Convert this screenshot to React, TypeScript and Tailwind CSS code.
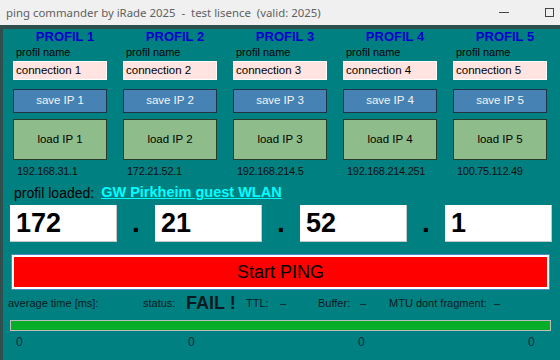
const profiles = [
  { n: 1, name: "connection 1", ip: "192.168.31.1" },
  { n: 2, name: "connection 2", ip: "172.21.52.1" },
  { n: 3, name: "connection 3", ip: "192.168.214.5" },
  { n: 4, name: "connection 4", ip: "192.168.214.251" },
  { n: 5, name: "connection 5", ip: "100.75.112.49" },
];

const octets = ["172", "21", "52", "1"];

function ProfileColumn({ n, name, ip }: { n: number; name: string; ip: string }) {
  return (
    <div className="flex w-[94px] flex-col">
      <div className="h-[15px] pl-[10px] text-center text-[13px] font-bold leading-[15px] text-[#0000cd]">
        PROFIL {n}
      </div>
      <div className="mt-[1px] h-[14px] pl-[3px] text-[11px] leading-[14px] text-black">profil name</div>
      <div className="mt-[2px] flex h-[19px] items-center border border-white bg-[#ffe4e1] pl-[2px] text-[11.5px] text-black">
        {name}
      </div>
      <div className="mt-[9px] flex h-[24px] items-center justify-center border border-[#1c3348] bg-[#4682b4] text-[11.5px] text-[#f4f4f4]">
        save IP {n}
      </div>
      <div className="mt-[6px] flex h-[41px] items-center justify-center border border-[#283a28] bg-[#8fbc8b] text-[11.5px] text-black">
        load IP {n}
      </div>
      <div className="mt-[4px] h-[14px] whitespace-nowrap pl-[4px] text-[11px] leading-[14px] tracking-[-0.3px] text-[#111]">
        {ip}
      </div>
    </div>
  );
}

export default function App() {
  return (
    <div className="flex h-[360px] w-[560px] flex-col overflow-hidden font-['Liberation_Sans',Arial,sans-serif]">
      <div className="flex h-[25px] shrink-0 items-center bg-[#f0f0f0] pl-[6px]">
        <span className="whitespace-pre font-['Noto_Sans',sans-serif] text-[11.4px] text-[#5f5f5f]">
          {"ping commander by iRade 2025  -  test lisence  (valid: 2025)"}
        </span>
        <span className="ml-auto mr-[36px] block h-px w-[10px] shrink-0 bg-[#444]" />
        <span className="mr-[6px] block h-[9px] w-[9px] shrink-0 border border-[#444]" />
      </div>
      <div className="flex flex-1 flex-col border-l-[3px] border-t-[4px] border-[#2f4f4f] bg-[#008080]">
        <div className="flex gap-[16px] pl-[10px]">
          {profiles.map((p) => (
            <ProfileColumn key={p.n} {...p} />
          ))}
        </div>

        <div className="mt-[7px] flex h-[16px] items-center gap-[7px] pl-[11px]">
          <span className="text-[14px] text-black">profil loaded:</span>
          <span className="text-[14.5px] font-bold text-[#00ffff] underline">GW Pirkheim guest WLAN</span>
        </div>

        <div className="mt-[3px] flex items-baseline pl-[7px]">
          {octets.map((o, i) => (
            <div key={i} className="flex items-baseline">
              <div className="h-[37px] w-[107px] border-b border-r border-[#c8c8c8] bg-white pl-[6px] text-[27px] font-bold leading-[37px] text-black">
                {o}
              </div>
              {i < 3 && (
                <span className="w-[38px] text-center text-[28px] font-bold leading-[37px] text-black">.</span>
              )}
            </div>
          ))}
        </div>

        <div className="ml-[9px] mt-[13px] flex h-[34px] w-[537px] items-center justify-center border-2 border-white bg-[#ff0000] text-[18px] text-black shadow-[0_0_0_1px_#4a8ccc]">
          Start PING
        </div>

        <div className="mt-[5px] flex h-[18px] items-center whitespace-nowrap pl-[5px] text-[11px] text-[#0b1a22]">
          <span className="w-[135px]">average time [ms]:</span>
          <span className="w-[43px]">status:</span>
          <span className="w-[60px] text-[18px] font-bold">FAIL !</span>
          <span className="w-[34px]">TTL:</span>
          <span className="w-[38px]">–</span>
          <span className="w-[42px]">Buffer:</span>
          <span className="w-[29px]">–</span>
          <span className="w-[105px]">MTU dont fragment:</span>
          <span>–</span>
        </div>

        <div className="ml-[7px] mt-[8px] h-[11px] w-[541px] border border-[#bdbdbd] bg-[#07ad27]" />

        <div className="mt-[2px] flex pl-[13px] text-[12px] text-[#0a2a3a]">
          <span className="w-[172px]">0</span>
          <span className="w-[170px]">0</span>
          <span className="w-[170px]">0</span>
          <span>0</span>
        </div>
      </div>
    </div>
  );
}
